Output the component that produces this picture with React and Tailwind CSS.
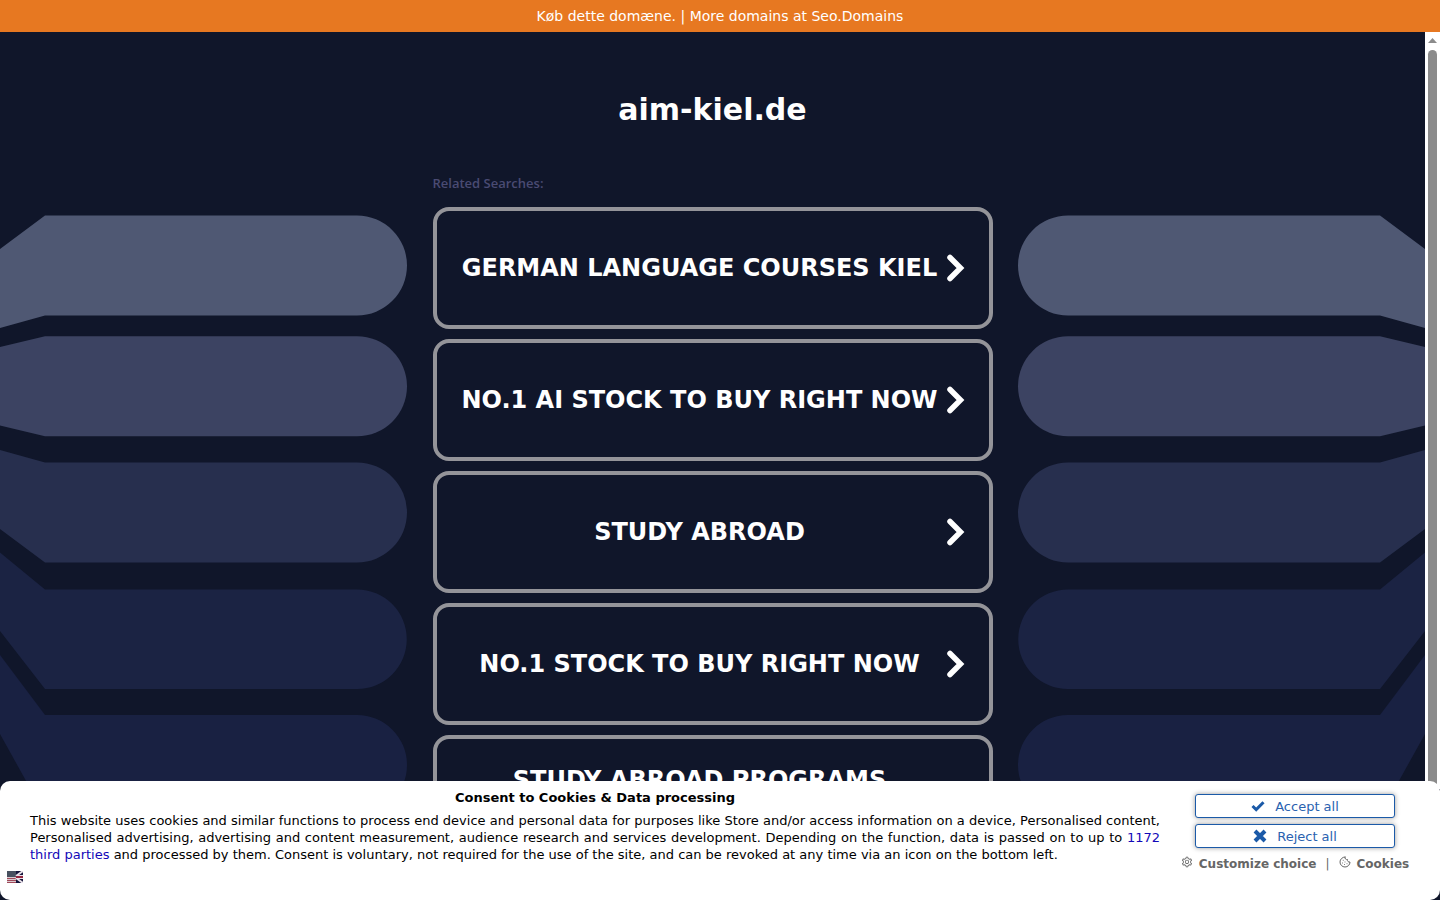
import { AiOutlineSetting } from "react-icons/ai";
import { LuCookie } from "react-icons/lu";

const searches = [
  { label: "GERMAN LANGUAGE COURSES KIEL" },
  { label: "NO.1 AI STOCK TO BUY RIGHT NOW" },
  { label: "STUDY ABROAD" },
  { label: "NO.1 STOCK TO BUY RIGHT NOW" },
  { label: "STUDY ABROAD PROGRAMS", className: "pb-8" },
];

// Bands fading into the page, the right side is the same drawing mirrored
const Bands = ({ className }) => (
  <svg
    className={className}
    width="408"
    height="868"
    viewBox="0 0 408 868"
    aria-hidden="true"
  >
    <path fill="#4f5873" d="M0 217 45 183.500H357A50 50 0 0 1 357 283.500H45L0 296Z" />
    <path fill="#3c4362" d="M0 315 45 304.300H357A50 50 0 0 1 357 404.300H45L0 393.500Z" />
    <path fill="#272f4e" d="M0 418 45 430.500H357A50 50 0 0 1 357 530.500H45L0 497Z" />
    <path fill="#1b2343" d="M0 520.500 45 557.500H357A49.700 49.700 0 0 1 357 657H45L0 599Z" />
    <path fill="#192142" d="M0 623 45 683H357A50 50 0 0 1 357 783H45L0 702Z" />
  </svg>
);

const Chevron = () => (
  <svg className="shrink-0" width="18" height="28" viewBox="0 0 18 28" aria-hidden="true">
    <path
      d="M3 3.500 13.500 14 3 24.500"
      fill="none"
      stroke="#fff"
      strokeWidth="5.500"
      strokeLinecap="round"
    />
  </svg>
);

const SearchLink = ({ label, className = "" }) => (
  <a
    href="#"
    className="flex h-[122px] items-center rounded-2xl border-4 border-[#949499] pl-4 pr-6"
  >
    <span
      className={`flex-1 text-center text-2xl font-bold text-white whitespace-nowrap ${className}`}
    >
      {label}
    </span>
    <Chevron />
  </a>
);

const Scrollbar = () => (
  <div className="flex w-[15px] shrink-0 flex-col items-center bg-white" aria-hidden="true">
    <svg width="15" height="18" viewBox="0 0 15 18">
      <path d="M3 11 7.500 6 12 11Z" fill="#8b8b8b" />
    </svg>
    <div className="w-[9px] flex-1 rounded-t-full bg-[#8b8b8b]" />
  </div>
);

const CheckIcon = () => (
  <svg width="14" height="12" viewBox="0 0 14 12" aria-hidden="true">
    <path fill="none" stroke="#1b5aa8" strokeWidth="3" d="M1.500 6 5.200 9.600 12.500 2.200" />
  </svg>
);

const CrossIcon = () => (
  <svg width="14" height="14" viewBox="0 0 14 14" aria-hidden="true">
    <path fill="none" stroke="#1b5aa8" strokeWidth="4" d="M2 2 12 12M12 2 2 12" />
  </svg>
);

// Half US, half UK
const FlagIcon = () => (
  <svg width="16" height="12" viewBox="0 0 16 12" aria-hidden="true">
    <path fill="#d9c9cf" d="M0 0h9v12H0z" />
    <path fill="#a04a5a" d="M0 7h9v1H0zM0 9h9v1H0zM0 11h9v1H0z" />
    <path fill="#47505f" d="M0 0h9v6H0z" />
    <path fill="#14153a" d="M9 0h7v12H9z" />
    <path stroke="#e8e0e8" strokeWidth="2" d="M9 5 16 0M9 7 16 12" />
    <path fill="#e8e0e8" d="M9 4h7v4H9z" />
    <path fill="#93263f" d="M9 5h7v2H9z" />
  </svg>
);

const CookieConsent = () => (
  <div className="relative -mt-2 flex min-h-[119px] shrink-0 rounded-[10px] bg-white pr-[10px] text-[13px] leading-[17px] text-black">
    <div className="flex flex-1 flex-col">
      <div className="pl-[30px] pt-2">
        <h2 className="text-center font-bold">Consent to Cookies &amp; Data processing</h2>
        <p className="mt-[6px] text-justify">
          This website uses cookies and similar functions to process end device and personal data
          for purposes like Store and/or access information on a device, Personalised content,
          Personalised advertising, advertising and content measurement, audience research and
          services development. Depending on the function, data is passed on to up to{" "}
          <a href="#" className="text-[#1208b8]">1172 third parties</a> and processed by them.
          Consent is voluntary, not required for the use of the site, and can be revoked at any
          time via an icon on the bottom left.
        </p>
      </div>
      <button type="button" aria-label="Language" className="ml-[7px] mt-2 self-start">
        <FlagIcon />
      </button>
    </div>
    <div className="flex w-[270px] shrink-0 flex-col items-center pt-[13px]">
      <div className="flex w-[200px] flex-col gap-[6px] text-[#2a62b0]">
        <button
          type="button"
          className="flex h-6 items-center justify-center gap-[10px] rounded-[3px] border border-[#1b5aa8] bg-white shadow-[0_0_5px_#999]"
        >
          <CheckIcon />
          Accept all
        </button>
        <button
          type="button"
          className="flex h-6 items-center justify-center gap-[10px] rounded-[3px] border border-[#1b5aa8] bg-white shadow-[0_0_5px_#999]"
        >
          <CrossIcon />
          Reject all
        </button>
      </div>
      <div className="mt-2 flex gap-[9px] text-xs leading-[17px] text-[#666]">
        <a href="#" className="flex gap-[6px] font-bold">
          <AiOutlineSetting className="size-3" />
          Customize choice
        </a>
        <span>|</span>
        <a href="#" className="flex gap-[6px] font-bold">
          <LuCookie className="size-3" />
          Cookies
        </a>
      </div>
    </div>
  </div>
);

const App = () => {
  return (
    <div className="flex h-screen flex-col overflow-hidden bg-[#10162a] font-['DejaVu_Sans',sans-serif]">
      <a
        href="#"
        className="flex h-8 shrink-0 items-center justify-center bg-[#e77821] text-sm text-white"
      >
        Køb dette domæne. | More domains at Seo.Domains
      </a>
      <div className="flex min-h-0 flex-1">
        <main className="relative flex-1 overflow-hidden">
          <Bands className="absolute left-0 top-0" />
          <Bands className="absolute right-0 top-0 -scale-x-100" />
          <div className="relative mx-auto w-[560px] pt-[58px]">
            <h1 className="text-center text-[30px] font-bold leading-10 text-white">
              aim-kiel.de
            </h1>
            <p className="mt-[43px] font-['Open_Sans',sans-serif] text-[13px] font-semibold leading-5 text-[#4a4b73]">
              Related Searches:
            </p>
            <nav className="mt-[14px] flex flex-col gap-[10px]">
              {searches.map((item) => (
                <SearchLink key={item.label} {...item} />
              ))}
            </nav>
          </div>
        </main>
        <Scrollbar />
      </div>
      <CookieConsent />
    </div>
  );
};

export default App;
